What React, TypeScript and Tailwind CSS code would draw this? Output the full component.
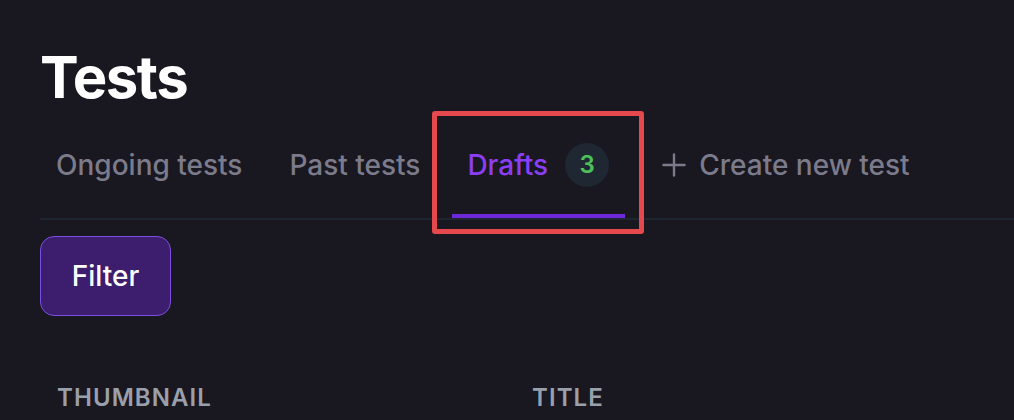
import React from "react";

export default function App() {
  return (
    <div
      className="min-h-[420px] w-full bg-[#19171f] overflow-hidden pl-10"
      style={{ fontFamily: "Inter, 'Noto Sans', sans-serif" }}
    >
      <h1 className="pt-[47px] text-[58px] leading-[60px] font-bold text-white tracking-[-0.025em]">
        Tests
      </h1>
      <div className="mt-[36px] flex items-end gap-4 border-b-2 border-[#1f2530]">
        <div className="px-4 pb-[27px] border-b-4 border-transparent flex items-center h-[75px]">
          <span className="text-[28px] leading-[40px] font-medium text-[#7c7b8b]">Ongoing tests</span>
        </div>
        <div className="-ml-[1px] px-4 pb-[27px] border-b-4 border-transparent flex items-center h-[75px]">
          <span className="text-[28px] leading-[40px] font-medium text-[#7c7b8b]">Past tests</span>
        </div>
        <div className="relative px-4 pb-[27px] border-b-4 border-[#6d28d9] flex items-center h-[75px]">
          <span className="-ml-[1px] text-[28px] leading-[40px] font-medium text-[#8b3ff5]">Drafts</span>
          <span className="ml-[17px] flex h-[44px] w-[44px] items-center justify-center rounded-full bg-[#1f2733] text-[24px] font-semibold text-[#4cc15b]">
            3
          </span>
          <div className="pointer-events-none absolute -left-[20px] -right-[19px] -top-[32px] -bottom-[20px] rounded-[3px] border-[5px] border-[#e5484d]" />
        </div>
        <div className="ml-[5px] px-4 pb-[27px] border-b-4 border-transparent flex items-center h-[75px] gap-[13px]">
          <svg width="24" height="24" viewBox="0 0 24 24" fill="none" stroke="#7c7b8b" strokeWidth="2.4" strokeLinecap="round">
            <path d="M12 1.5v21M1.5 12h21" />
          </svg>
          <span className="text-[28px] leading-[40px] font-medium text-[#7c7b8b]">Create new test</span>
        </div>
      </div>
      <div className="mt-4">
        <button className="h-[80px] w-[131px] rounded-[14px] border border-[#7c4fe0] bg-[#3d1d6e] text-[28px] font-medium text-white">
          Filter
        </button>
      </div>
      <div className="mt-[66px] flex">
        <div className="w-[476px] pl-[17px] pr-4 text-[24px] font-semibold tracking-[0.045em] text-[#9aa0ab] leading-[32px]">
          THUMBNAIL
        </div>
        <div className="px-4 text-[24px] font-semibold tracking-[0.045em] text-[#9aa0ab] leading-[32px]">
          TITLE
        </div>
      </div>
    </div>
  );
}
